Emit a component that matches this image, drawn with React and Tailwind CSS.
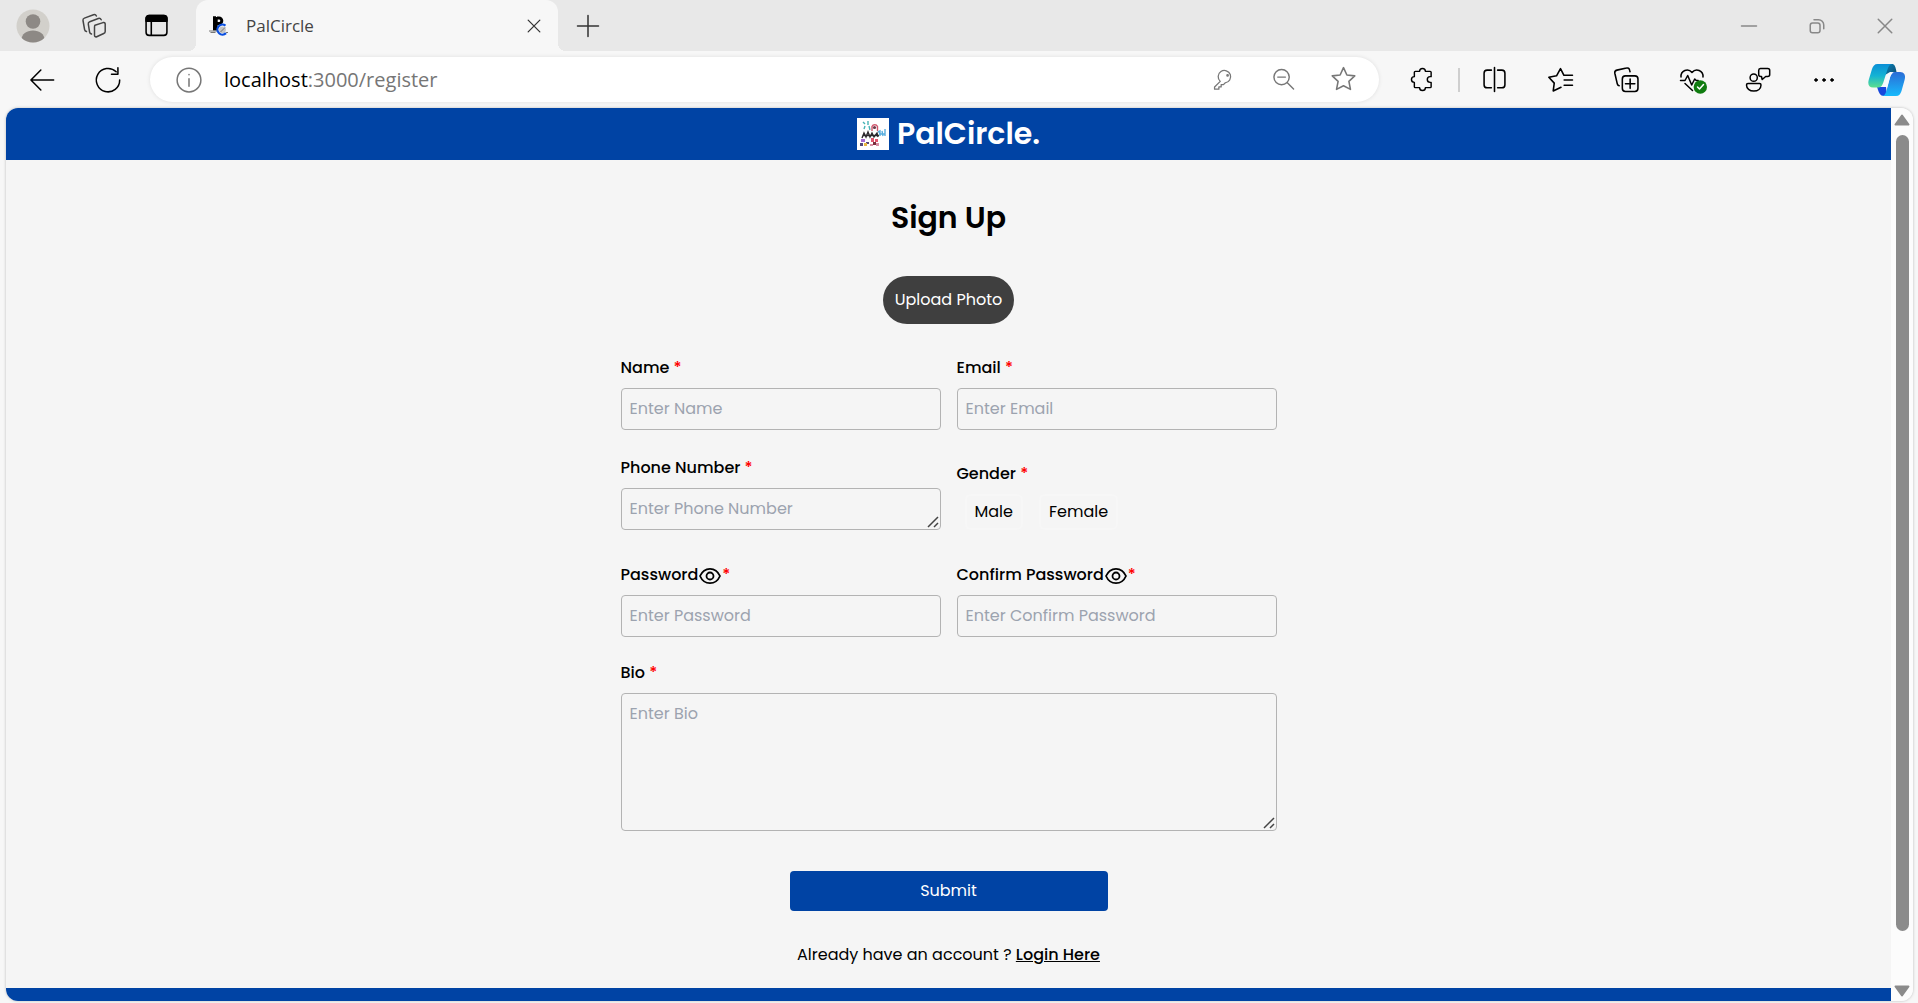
const INK = "#000000";

function Icon({ size = 24, color = INK, width = 1.5, children }) {
  return (
    <svg
      width={size}
      height={size}
      viewBox="0 0 24 24"
      fill="none"
      stroke={color}
      strokeWidth={width}
      strokeLinecap="round"
      strokeLinejoin="round"
      aria-hidden="true"
      className="shrink-0 overflow-visible"
    >
      {children}
    </svg>
  );
}

function IconButton({ label, children, className = "" }) {
  return (
    <button type="button" aria-label={label} className={`flex size-8 shrink-0 items-center justify-center ${className}`}>
      {children}
    </button>
  );
}

function Avatar() {
  return (
    <svg width="34" height="34" viewBox="0 0 34 34" aria-hidden="true">
      <defs>
        <clipPath id="avatar-clip">
          <circle cx="17" cy="17" r="16.5" />
        </clipPath>
      </defs>
      <g clipPath="url(#avatar-clip)">
        <rect width="34" height="34" fill="#d2d0cb" />
        <circle cx="17" cy="12.5" r="7.3" fill="#8d8985" />
        <path d="M5.5 31c0-6 5-9.500 11.500-9.500S28.500 25 28.500 31v4h-23z" fill="#8d8985" />
      </g>
    </svg>
  );
}

function Favicon() {
  return (
    <svg width="22" height="22" viewBox="0 0 22 22" fill="none" aria-hidden="true">
      <path d="M6 1.5v13.5M5 2.200h3M5 14.500h5" stroke="#000" strokeWidth="2" />
      <path d="M8 2v13" stroke="#000" strokeWidth="3.4" />
      <path d="M9 3h2a2.700 2.700 0 0 1 0 5.600H9" stroke="#000" strokeWidth="3" />
      <path d="M1 16h8M2.500 17.500h5M18 17.500h2" stroke="#777" />
      <circle cx="14.500" cy="14.800" r="3.400" fill="#c4c4c4" />
      <path d="M12.500 17l4.500-4.500" stroke="#777" />
      <path d="M17.500 10.600a5 5 0 1 0 .5 7.500" stroke="#0a4fe0" strokeWidth="2.200" />
    </svg>
  );
}

function CopilotLogo() {
  return (
    <svg width="38" height="34" viewBox="0 0 38 34" aria-hidden="true">
      <defs>
        <linearGradient id="cp-left" x1="0" y1="0" x2="0" y2="1">
          <stop offset="0" stopColor="#0b8fd6" />
          <stop offset=".5" stopColor="#14b3d4" />
          <stop offset="1" stopColor="#5cdf8e" />
        </linearGradient>
        <linearGradient id="cp-right" x1="0" y1="0" x2="0" y2="1">
          <stop offset="0" stopColor="#2b6cd6" />
          <stop offset="1" stopColor="#17bafc" />
        </linearGradient>
        <linearGradient id="cp-top" x1="0" y1="0" x2="1" y2="1">
          <stop offset="0" stopColor="#0a84b8" />
          <stop offset="1" stopColor="#0e4a70" />
        </linearGradient>
      </defs>
      <path d="M18 1h6c2.500 0 3.600 2.500 4.500 8H22l-5 3z" fill="url(#cp-top)" />
      <path d="M9 24h9l1 9h-3c-4 0-5-3-7-9z" fill="#1848dc" />
      <path d="M9.500 1h15c-3 0-4.200 3-5.200 6l-4 12.500c-1 3-2.500 5-5.300 5H5c-4 0-5.500-3-4.300-7.500L4 6c1-3 2.500-5 5.500-5z" fill="url(#cp-left)" />
      <path d="M27 9h5c4 0 6 3 4.700 7.500L33.500 28c-1 3-2.500 5-5.500 5H14c2.700 0 3.700-3 4.700-6l3.500-13c1-3 2-5 4.800-5z" fill="url(#cp-right)" />
      <path d="M23.500 9.500h2c-2 1-3 3-3.600 5l-2.700 9.500h-5c2-1.500 3-4 3.800-7l1.500-4c.8-2.500 2-3.500 4-3.500z" fill="#f4fbff" />
    </svg>
  );
}

function GroupLogo() {
  return (
    <svg width="32" height="32" viewBox="0 0 32 32" aria-hidden="true" className="shrink-0">
      <rect width="32" height="32" fill="#fff" />
      <g fill="none" strokeWidth="1.4">
        <path d="M6 4l2 2M11 3v4M8 8l-1 3M12 8l1 4" stroke="#45b3b5" />
        <path d="M15 13V8.500a3 3 0 0 1 5.500 0V13" stroke="#d0566c" />
        <path d="M21 14l2-1v5M25 13l1 5M28 11v7M22 16h6" stroke="#58aede" />
        <path d="M5 20l2-5 2 4 2-5 2 5 2-4 2 4 3-4 1 4M6 17.500h16" stroke="#2d2a2e" />
      </g>
      <circle cx="17.500" cy="9.500" r="1.600" fill="#6b3b4b" />
      <path d="M4 21h4v3H4z" fill="#a66ad0" />
      <path d="M3 25h3v3H3zM9 24h3v2H9z" fill="#554a78" />
      <path d="M7 25h3v3H7z" fill="#eab83f" />
      <path d="M14 20h3v4h-3zM18 21h3v3h-3z" fill="#e0566f" />
      <path d="M13 26h3v2h-3zM19 25h3v3h-3z" fill="#d98fa4" />
      <path d="M16 24h3v3h-3z" fill="#7a2d3d" />
    </svg>
  );
}

function TabStrip() {
  return (
    <div className="flex h-[51px] items-center bg-[#e8e8e8]">
      <div className="flex w-[196px] shrink-0 items-center pl-4">
        <button type="button" aria-label="Profile" className="shrink-0"><Avatar /></button>
        <IconButton label="Workspaces" className="ml-7">
          <Icon size={24} color="#444">
            <path d="M13 11.200l8-2.600c1.200-.3 2.200.2 2.200 1.400v7.500c0 1-.5 1.700-1.500 2l-7 3.200c-1.200.5-2.200-.2-2.200-1.500v-8c0-1 .1-1.700.5-2z" />
            <path d="M9.500 20c-1-.2-1.700-.8-1.900-1.900l-1.300-8c-.2-1.200.3-2 1.400-2.400l8.600-3.200c1.200-.4 2.400.2 2.900 1.300" />
            <path d="M4.500 17.500c-1-.2-1.700-.8-1.900-1.900L1 6.500c-.2-1.200.3-2 1.400-2.400L11.500.7c1.200-.4 2.400.2 2.900 1.300" />
          </Icon>
        </IconButton>
        <IconButton label="Tab actions" className="ml-[30px]">
          <Icon size={25}>
            <rect x="2" y="2.500" width="20" height="19" rx="3" />
            <path d="M2 8V5.500a3 3 0 0 1 3-3h14a3 3 0 0 1 3 3V8z" fill="#000" />
            <path d="M7 8v13" />
          </Icon>
        </IconButton>
      </div>
      <div className="relative flex h-full w-[362px] shrink-0 items-center rounded-t-xl bg-[#f7f7f7] pr-2 pl-3 before:absolute before:bottom-0 before:-left-2 before:size-2 before:bg-[radial-gradient(circle_at_0_0,transparent_8px,#f7f7f7_8px)] after:absolute after:-right-2 after:bottom-0 after:size-2 after:bg-[radial-gradient(circle_at_100%_0,transparent_8px,#f7f7f7_8px)]">
        <Favicon />
        <span className="ml-4 flex-1 text-[17px] text-[#444]">PalCircle</span>
        <IconButton label="Close tab">
          <Icon size={20} color="#333"><path d="M5 5l14 14M19 5L5 19" /></Icon>
        </IconButton>
      </div>
      <IconButton label="New tab" className="ml-3.5">
        <Icon size={28} color="#333" width={1.3}><path d="M12 3v18M3 12h18" /></Icon>
      </IconButton>
      <div className="ml-auto flex items-center gap-9 pr-[17px]">
        <IconButton label="Minimize"><Icon size={18} color="#888" width={2}><path d="M2 12h20" /></Icon></IconButton>
        <IconButton label="Restore">
          <Icon size={18} color="#888" width={2}>
            <rect x="3" y="8" width="13" height="13" rx="3" />
            <path d="M8 3.500h6a7 7 0 0 1 7 7v5" />
          </Icon>
        </IconButton>
        <IconButton label="Close window"><Icon size={18} color="#888" width={2}><path d="M3 3l18 18M21 3L3 21" /></Icon></IconButton>
      </div>
    </div>
  );
}

function Toolbar() {
  return (
    <div className="flex h-[57px] items-center bg-[#f7f7f7] pr-3 pl-[26px]">
      <IconButton label="Back"><Icon size={28} width={1.3}><path d="M22 12H2.500M11 3.500L2.500 12l8.500 8.500" /></Icon></IconButton>
      <IconButton label="Refresh" className="ml-[34px]">
        <Icon size={28} width={1.3}><path d="M22 12a10 10 0 1 1-3-7M20.500 1.500v5.500h-5.500" /></Icon>
      </IconButton>
      <div className="ml-[26px] flex h-[45px] min-w-0 flex-1 items-center rounded-full bg-white pr-5 pl-6 shadow-[0_0_4px_rgba(0,0,0,0.1)]">
        <Icon size={30} color="#767676" width={1.2}>
          <circle cx="12" cy="12" r="9.500" />
          <path d="M12 11v6M12 7.500v.2" />
        </Icon>
        <div className="ml-5 flex-1 text-xl text-[#767676]">
          <span className="text-black">localhost</span>:3000/register
        </div>
        <div className="flex gap-7">
          <IconButton label="Saved passwords">
            <Icon size={22} color="#777" width={1.4}>
              <path d="M9 13.500L2.800 19.700V22h4.700v-2.500h2.500V17h2.500l1.800-1.800a6.800 6.800 0 1 0-5.300-1.700z" />
              <circle cx="17" cy="7" r=".8" />
            </Icon>
          </IconButton>
          <IconButton label="Zoom out">
            <Icon size={23} color="#777">
              <circle cx="10" cy="9.500" r="8" />
              <path d="M16 15.500l6.500 6.500M6 9.500h8" />
            </Icon>
          </IconButton>
          <IconButton label="Add to favorites">
            <Icon size={27} color="#777" width={1.4}>
              <path d="M12 1.500l3 6.500 7 .8-5.200 4.800 1.400 7.200L12 17.500l-6.200 3.300 1.400-7.200L2 8.800l7-.8z" />
            </Icon>
          </IconButton>
        </div>
      </div>
      <div className="flex items-center">
        <IconButton label="Extensions" className="ml-[27px]">
          <Icon size={23}>
            <path d="M9 3.500a3 3 0 0 1 6 0h5a1 1 0 0 1 1 1V9h-1a3 3 0 0 0 0 6h1v4.500a1 1 0 0 1-1 1h-5a3 3 0 0 1-6 0H4.500a1 1 0 0 1-1-1V15a3 3 0 0 1 0-6V4.500a1 1 0 0 1 1-1z" />
          </Icon>
        </IconButton>
        <span className="ml-5 h-6 w-0.5 bg-[#cfcfcf]" />
        <div className="ml-[18px] flex gap-[34px]">
          <IconButton label="Split screen">
            <Icon size={25}>
              <path d="M12 .5v23M9 3H5a3 3 0 0 0-3 3v11a3 3 0 0 0 3 3h4M15 3h4a3 3 0 0 1 3 3v11a3 3 0 0 1-3 3h-4" />
            </Icon>
          </IconButton>
          <IconButton label="Favorites">
            <Icon size={25}>
              <path d="M12.500 19.500L5 23l1-7.500L.8 9.800l7.400-1.300L12 1.500l3.300 6.500H23.500M15.500 12.500h8M15.500 17.500h8" />
            </Icon>
          </IconButton>
          <IconButton label="Collections">
            <Icon size={25}>
              <rect x="8" y="8.500" width="15" height="15" rx="3" />
              <path d="M15.500 11.500v9M11 16h9M5 18c-1 0-1.500-.6-1.800-1.600L.8 6c-.3-1.500.4-2.600 2-3l9.200-2c1.600-.4 2.600.3 3 2l.4 1.500" />
            </Icon>
          </IconButton>
          <IconButton label="Browser essentials">
            <Icon size={24}>
              <path d="M1 9C.5 2.500 8-.5 12 4.500 16-.5 23.500 2.500 23 9M.5 12.500h4.500l2.700-5 4 9.500 3-6 1.500 1.500h2M5 15.500l7.500 7" />
              <circle cx="20.300" cy="19" r="6.700" fill="#107c10" stroke="none" />
              <path d="M17.500 19l2 2 4-4.500" stroke="#fff" />
            </Icon>
          </IconButton>
          <IconButton label="Feedback">
            <Icon size={24}>
              <circle cx="7.700" cy="9.700" r="3.600" />
              <path d="M2 15.500h11.500A1.500 1.500 0 0 1 15 17c0 3.500-3 6-7.200 6S.500 20.500.500 17A1.500 1.500 0 0 1 2 15.500z" />
              <path d="M14.500.5h7.200a2 2 0 0 1 2 2v4a2 2 0 0 1-2 2h-2l-3.500 3-.7-3h-.8a2 2 0 0 1-2-2v-4a2 2 0 0 1 1.800-2z" />
            </Icon>
          </IconButton>
          <IconButton label="Settings and more">
            <Icon size={24} width={1}>
              <g fill="#000"><circle cx="4" cy="12" r="1.300" /><circle cx="12" cy="12" r="1.300" /><circle cx="20" cy="12" r="1.300" /></g>
            </Icon>
          </IconButton>
        </div>
        <button type="button" aria-label="Copilot" className="ml-7 shrink-0"><CopilotLogo /></button>
      </div>
    </div>
  );
}

const box =
  "block w-full rounded border border-[#b3b3b3] bg-transparent px-2 py-2 text-base leading-6 placeholder:text-[#9ca3af] outline-none";

function Star() {
  return <span className="text-[#ff0000]">*</span>;
}

function Field({ id, label, placeholder, type = "text", area = false, rows = 1, className = "" }) {
  return (
    <div className={className}>
      <label htmlFor={id} className="mb-2 block font-medium">
        {label} <Star />
      </label>
      {area ? (
        <div className="relative">
          <textarea id={id} rows={rows} placeholder={placeholder} className={`${box} resize-none`} />
          <svg width="12" height="12" viewBox="0 0 12 12" fill="none" stroke="#444" strokeWidth="1.5" aria-hidden="true" className="pointer-events-none absolute right-0.5 bottom-0.5">
            <path d="M1 11L11 1M7 11l4-4" />
          </svg>
        </div>
      ) : (
        <input id={id} type={type} placeholder={placeholder} className={box} />
      )}
    </div>
  );
}

function PasswordField({ id, label, placeholder }) {
  return (
    <div>
      <div className="mb-2 flex items-center font-medium">
        <label htmlFor={id}>{label}</label>
        <button type="button" aria-label={`Show ${label}`} className="mx-px">
          <svg width="22" height="24" viewBox="0 0 22 24" fill="none" stroke="#000" strokeWidth="1.8" strokeLinejoin="round" aria-hidden="true">
            <path d="M1 13C3 8.500 6.700 5.800 11 5.800S19 8.500 21 13c-2 4.500-5.700 7.200-10 7.200S3 17.500 1 13z" />
            <circle cx="11" cy="13" r="3.500" />
          </svg>
        </button>
        <Star />
      </div>
      <input id={id} type="password" placeholder={placeholder} className={box} />
    </div>
  );
}

function Gender() {
  return (
    <fieldset className="mt-2">
      <legend className="mb-2 font-medium">Gender <Star /></legend>
      <div className="flex gap-4 pl-2">
        {["Male", "Female"].map((g) => (
          <label key={g} className="rounded-md border-2 border-[#f7f7f7] px-2 py-1">
            <input type="radio" name="gender" value={g} className="sr-only" />
            {g}
          </label>
        ))}
      </div>
    </fieldset>
  );
}

function RegisterPage() {
  return (
    <div className="flex min-w-0 flex-1 flex-col bg-[#f5f5f5] font-['Poppins','Inter',sans-serif] text-base leading-6 text-black">
      <header className="flex h-[52px] items-center justify-center gap-2 bg-[#0043a4] text-white">
        <GroupLogo />
        <span className="text-3xl font-semibold">PalCircle.</span>
      </header>
      <main className="flex flex-1 flex-col items-center">
        <h1 className="mt-10 text-3xl font-semibold">Sign Up</h1>
        <button type="button" className="mt-10 h-12 rounded-full bg-[#3f3f3f] px-3 text-white">Upload Photo</button>
        <form className="mt-8 flex w-full max-w-[656px] flex-col items-center">
          <div className="grid w-full grid-cols-2 gap-x-4 gap-y-6">
            <Field id="name" label="Name" placeholder="Enter Name" />
            <Field id="email" label="Email" placeholder="Enter Email" type="email" />
            <Field id="phone" label="Phone Number" placeholder="Enter Phone Number" area className="pt-0.5 pb-[9px]" />
            <Gender />
            <PasswordField id="password" label="Password" placeholder="Enter Password" />
            <PasswordField id="confirm" label="Confirm Password" placeholder="Enter Confirm Password" />
            <Field id="bio" label="Bio" placeholder="Enter Bio" area rows={5} className="col-span-2" />
          </div>
          <button type="submit" className="mt-10 h-10 w-[318px] rounded-sm bg-[#0043a4] text-white">Submit</button>
        </form>
        <p className="mt-8 mb-5">
          Already have an account ? <a href="#login" className="font-medium underline">Login Here</a>
        </p>
      </main>
      <footer className="h-[13px] bg-[#0043a4]" />
    </div>
  );
}

function Scrollbar() {
  return (
    <div aria-hidden="true" className="flex w-[22px] shrink-0 flex-col items-center bg-[#fcfcfc] pt-1.5 pb-1">
      <svg width="16" height="12" viewBox="0 0 16 12"><path d="M8 1.500L14.500 10.500h-13z" fill="#8b8b8b" stroke="#8b8b8b" strokeWidth="2" strokeLinejoin="round" /></svg>
      <div className="mt-[9px] mb-[54px] w-[13px] flex-1 rounded-full bg-[#8b8b8b]" />
      <svg width="16" height="12" viewBox="0 0 16 12"><path d="M8 10.500L14.500 1.500h-13z" fill="#8b8b8b" stroke="#8b8b8b" strokeWidth="2" strokeLinejoin="round" /></svg>
    </div>
  );
}

export default function App() {
  return (
    <div className="flex min-h-screen flex-col bg-[#f7f7f7] font-['Segoe_UI','Open_Sans',sans-serif]">
      <TabStrip />
      <Toolbar />
      <div className="mr-[5px] mb-0.5 ml-1.5 flex flex-1 overflow-hidden rounded-xl shadow-[0_0_3px_rgba(0,0,0,0.25)]">
        <RegisterPage />
        <Scrollbar />
      </div>
    </div>
  );
}
